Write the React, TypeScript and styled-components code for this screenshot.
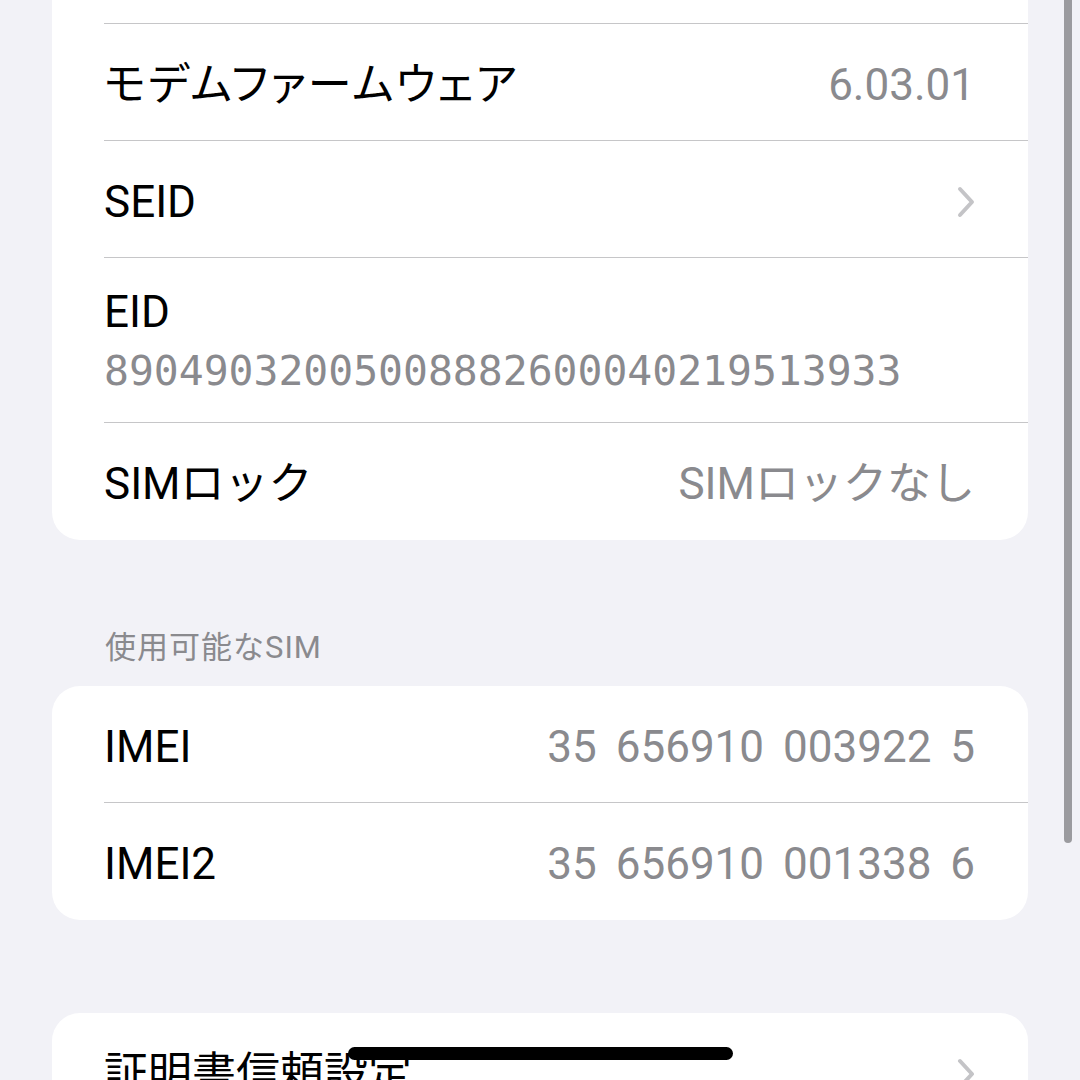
import * as React from 'react';
import styled, { createGlobalStyle } from 'styled-components';

const GlobalStyle = createGlobalStyle`
  html, body {
    margin: 0;
    padding: 0;
    background: #f2f2f7;
    overflow: hidden;
  }
  body {
    font-family: Roboto, "Noto Sans CJK JP", sans-serif;
    -webkit-font-smoothing: antialiased;
  }
`;

const Page = styled.div`
  height: 1080px;
  overflow: hidden;
  padding: 0 52px;
  box-sizing: border-box;
`;

const Card = styled.div<{ $offset?: number; $gap?: number }>`
  background: #ffffff;
  border-radius: 28px;
  padding-left: 52px;
  margin-top: ${(p) => (p.$offset !== undefined ? `${p.$offset}px` : '0')};
  margin-bottom: ${(p) => (p.$gap !== undefined ? `${p.$gap}px` : '0')};
  overflow: hidden;
`;

const Row = styled.div`
  display: flex;
  align-items: center;
  justify-content: space-between;
  box-sizing: border-box;
  height: 117px;
  padding: 5px 53px 0 0;
  border-bottom: 1px solid #c6c6c8;
  &:last-child {
    border-bottom: none;
  }
`;

const StackRow = styled.div`
  display: flex;
  flex-direction: column;
  justify-content: center;
  gap: 7px;
  box-sizing: border-box;
  height: 165px;
  padding: 2px 53px 0 0;
  border-bottom: 1px solid #c6c6c8;
`;

const Label = styled.div<{ $kana?: boolean }>`
  font-size: 44px;
  line-height: 52px;
  color: #000000;
  white-space: nowrap;
  font-feature-settings: ${(p) => (p.$kana ? '"palt"' : 'normal')};
  letter-spacing: ${(p) => (p.$kana ? '2.2px' : '0')};
`;

const Value = styled.div`
  font-size: 44px;
  line-height: 52px;
  color: #8a8a8e;
  word-spacing: 8px;
  white-space: nowrap;
`;

const MonoValue = styled.div`
  font-family: "DejaVu Sans Mono", monospace;
  font-size: 41.4px;
  line-height: 52px;
  color: #8a8a8e;
  white-space: nowrap;
`;

const SectionHeader = styled.div`
  margin-top: 88px;
  margin-bottom: 18px;
  padding-left: 53px;
  font-size: 31px;
  line-height: 40px;
  letter-spacing: 1px;
  color: #8a8a8e;
`;

const Chevron = styled.svg`
  width: 22px;
  height: 34px;
  margin-right: -2px;
  flex-shrink: 0;
`;

const HomeIndicator = styled.div`
  position: fixed;
  left: 348px;
  top: 1047px;
  width: 385px;
  height: 13px;
  border-radius: 7px;
  background: #000000;
`;

const ScrollBar = styled.div`
  position: fixed;
  left: 1064px;
  top: -10px;
  width: 8px;
  height: 853px;
  border-radius: 4px;
  background: #9b9b9f;
`;

const Arrow = () => (
  <Chevron viewBox="0 0 22 34">
    <polyline
      points="5,4 17,17 5,30"
      fill="none"
      stroke="#c4c4c7"
      strokeWidth="4"
      strokeLinecap="round"
      strokeLinejoin="round"
    />
  </Chevron>
);

export default function App() {
  return (
    <>
      <GlobalStyle />
      <Page>
        <Card $offset={-93}>
          <Row />
          <Row>
            <Label $kana>モデムファームウェア</Label>
            <Value>6.03.01</Value>
          </Row>
          <Row>
            <Label>SEID</Label>
            <Arrow />
          </Row>
          <StackRow>
            <Label>EID</Label>
            <MonoValue>89049032005008882600040219513933</MonoValue>
          </StackRow>
          <Row>
            <Label>SIMロック</Label>
            <Value>SIMロックなし</Value>
          </Row>
        </Card>

        <SectionHeader>使用可能なSIM</SectionHeader>

        <Card $gap={93}>
          <Row>
            <Label>IMEI</Label>
            <Value>35 656910 003922 5</Value>
          </Row>
          <Row>
            <Label>IMEI2</Label>
            <Value>35 656910 001338 6</Value>
          </Row>
        </Card>

        <Card>
          <Row>
            <Label>証明書信頼設定</Label>
            <Arrow />
          </Row>
        </Card>
      </Page>
      <ScrollBar />
      <HomeIndicator />
    </>
  );
}
